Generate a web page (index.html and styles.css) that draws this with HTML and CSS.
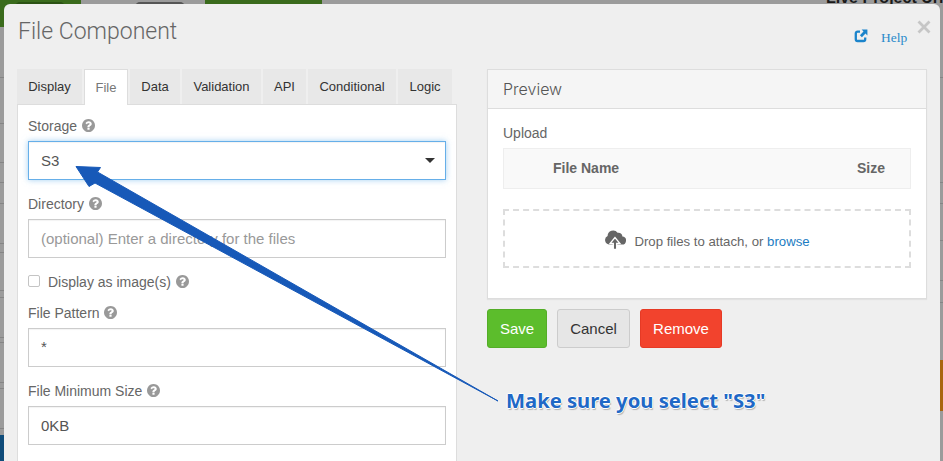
FILE: index.html
```html
<!DOCTYPE html>
<html lang="en">
<head>
<meta charset="utf-8">
<title>File Component</title>
<link rel="stylesheet" href="styles.css">
</head>
<body>
<svg class="defs" width="0" height="0" aria-hidden="true">
  <symbol id="q" viewBox="128 128 1536 1536"><path d="M1024 1376v-192q0-14-9-23t-23-9H800q-14 0-23 9t-9 23v192q0 14 9 23t23 9h192q14 0 23-9t9-23zm256-672q0-88-55.500-163T1086 425t-170-41q-243 0-371 213-15 24 8 42l132 100q7 6 19 6 16 0 25-12 53-68 86-92 34-24 86-24 48 0 85.500 26t37.500 59q0 38-20 61t-68 45q-63 28-115.500 86.500T768 1020v36q0 14 9 23t23 9h192q14 0 23-9t9-23q0-19 21.500-49.500T1100 957q32-18 49-28.500t46-35 44.500-48 28-60.500 12.500-81zm384 192q0 209-103 385.500T1281.500 1561 896 1664t-385.500-103T231 1281.500 128 896t103-385.500T510.500 231 896 128t385.500 103T1561 510.500 1664 896z"/></symbol>
</svg>

<div class="backdrop">
  <div class="bd-green bd-g1"></div>
  <div class="bd-pill bd-p1"></div>
  <div class="bd-green bd-g2"></div>
  <div class="bd-pill bd-p2"></div>
  <div class="bd-url">Live Project Url</div>
  <div class="bd-orange"></div>
  <div class="bd-blue"></div>
  <div class="rail rail-left">
    <i></i><i></i><i></i><i></i><i></i><i></i><i></i><i></i><i></i><i></i><i></i><i></i><i></i><i></i>
  </div>
  <div class="rail rail-right">
    <i></i><i></i><i></i><i></i><i></i><i></i>
  </div>
</div>

<main class="modal">
  <header class="modal-head">
    <h1 class="title">File Component</h1>
    <a class="help">
      <svg class="help-icon" viewBox="0 0 14 14" aria-hidden="true">
        <path d="M6 2.600H3.600A1.800 1.800 0 0 0 1.800 4.400v5.800A1.800 1.800 0 0 0 3.600 12h5.800a1.800 1.800 0 0 0 1.800-1.800V8.400" fill="none" stroke="#1b84cb" stroke-width="2.300"/>
        <path d="M7.600.6h5.800v5.800l-1.900-1.900-3.600 3.700-2-2 3.600-3.700z" fill="#1b84cb"/>
      </svg>
      <span class="help-text">Help</span>
    </a>
    <svg class="close" viewBox="0 0 14 14" aria-label="Close">
      <path d="M1.500 1.500L12.500 12.500M12.500 1.500L1.500 12.500" stroke="#c6c6c6" stroke-width="2.800" fill="none"/>
    </svg>
  </header>

  <div class="columns">
    <section class="left">
      <nav class="tabs">
        <span class="tab tab-display">Display</span>
        <span class="tab tab-file active">File</span>
        <span class="tab tab-data">Data</span>
        <span class="tab tab-validation">Validation</span>
        <span class="tab tab-api">API</span>
        <span class="tab tab-conditional">Conditional</span>
        <span class="tab tab-logic">Logic</span>
      </nav>
      <div class="tab-panel">
        <div class="label">Storage <svg class="q"><use href="#q"/></svg></div>
        <div class="select"><span>S3</span><i class="caret"></i></div>

        <div class="label label-dir">Directory <svg class="q"><use href="#q"/></svg></div>
        <input class="input" type="text" placeholder="(optional) Enter a directory for the files">

        <div class="check-row">
          <span class="checkbox"></span>
          <span class="check-label">Display as image(s) <svg class="q"><use href="#q"/></svg></span>
        </div>

        <div class="label label-pattern">File Pattern <svg class="q"><use href="#q"/></svg></div>
        <input class="input input-star" type="text" value="*">

        <div class="label label-min">File Minimum Size <svg class="q"><use href="#q"/></svg></div>
        <input class="input" type="text" value="0KB">
      </div>
    </section>

    <section class="right">
      <div class="preview">
        <div class="preview-head">Preview</div>
        <div class="preview-body">
          <div class="upload-label">Upload</div>
          <div class="file-table">
            <span class="th-name">File Name</span>
            <span class="th-size">Size</span>
          </div>
          <div class="dropzone">
            <svg class="cloud" viewBox="0 0 22 22" aria-hidden="true">
              <path d="M5 16.500A4.500 4.500 0 0 1 3.600 8a5.500 5.500 0 0 1 10-3.200A3.800 3.800 0 0 1 18.400 8.400 4 4 0 0 1 17.500 16.500z" fill="#666"/>
              <path d="M11 9.500l-5 6h3.300v6h3.400v-6h3.300z" fill="#666" stroke="#fff" stroke-width="1.300"/>
            </svg>
            <span class="drop-text">Drop files to attach, or <a class="browse">browse</a></span>
          </div>
        </div>
      </div>
      <div class="actions">
        <button class="btn btn-save">Save</button>
        <button class="btn btn-cancel">Cancel</button>
        <button class="btn btn-remove">Remove</button>
      </div>
    </section>
  </div>
</main>

<svg class="arrow" viewBox="0 0 943 461" aria-hidden="true">
  <path d="M76 166.500 L100.500 167.500 L97.500 172 L498 401 L95 183 L89 186.500 Z" fill="#1759b8" stroke="#1759b8" stroke-width="1" stroke-linejoin="round"/>
</svg>
<div class="note">Make sure you select "S3"</div>
</body>
</html>
```

FILE: styles.css
```css
* { box-sizing: border-box; }
html, body { height: 100%; }
body {
  margin: 0;
  width: 943px;
  height: 461px;
  overflow: hidden;
  background: #9b9b9b;
  font-family: "Liberation Sans", Arial, sans-serif;
  font-size: 14px;
  color: #666;
  position: relative;
}
.defs { position: absolute; }

/* dimmed page behind the dialog */
.backdrop { position: absolute; inset: 0; overflow: hidden; }
.bd-green { position: absolute; top: 0; background: #3a6b1c; }
.bd-g1 { left: 0; width: 81px; height: 27px; }
.bd-g2 { left: 205px; width: 117px; height: 4px; }
.bd-pill { position: absolute; top: 2px; height: 10px; border-radius: 5px; background: #555; }
.bd-p1 { left: 15px; width: 50px; background: #2b5214; }
.bd-p2 { left: 135px; width: 50px; }
.bd-url {
  position: absolute;
  left: 826px;
  top: -11px;
  font-size: 16px;
  font-weight: 700;
  line-height: 18px;
  color: #1a1a1a;
  white-space: nowrap;
}
.bd-orange { position: absolute; left: 940px; top: 360px; width: 3px; height: 51px; background: #a8650f; }
.bd-blue { position: absolute; left: 0; top: 435px; width: 4px; height: 26px; background: #0f4c7a; }
.rail { position: absolute; top: 0; width: 4px; height: 461px; }
.rail-left { left: 0; }
.rail-right { left: 940px; width: 3px; }
.rail i { position: absolute; left: 0; width: 100%; height: 1px; background: #858585; }
.rail-left i:nth-child(1) { top: 77px; }
.rail-left i:nth-child(2) { top: 123px; }
.rail-left i:nth-child(3) { top: 162px; }
.rail-left i:nth-child(4) { top: 182px; }
.rail-left i:nth-child(5) { top: 203px; }
.rail-left i:nth-child(6) { top: 243px; }
.rail-left i:nth-child(7) { top: 252px; }
.rail-left i:nth-child(8) { top: 290px; }
.rail-left i:nth-child(9) { top: 297px; }
.rail-left i:nth-child(10) { top: 337px; }
.rail-left i:nth-child(11) { top: 342px; }
.rail-left i:nth-child(12) { top: 382px; }
.rail-left i:nth-child(13) { top: 388px; }
.rail-left i:nth-child(14) { top: 428px; }
.rail-right i:nth-child(1) { top: 77px; }
.rail-right i:nth-child(2) { top: 182px; }
.rail-right i:nth-child(3) { top: 203px; }
.rail-right i:nth-child(4) { top: 240px; }
.rail-right i:nth-child(5) { top: 280px; }
.rail-right i:nth-child(6) { top: 302px; }

/* dialog */
.modal {
  position: absolute;
  left: 4px;
  top: 4px;
  width: 936px;
  height: 480px;
  padding: 0 13px;
  background: #efefef;
  border-radius: 6px 6px 0 0;
}
.modal-head {
  height: 65px;
  display: flex;
  align-items: flex-start;
  position: relative;
}
.title {
  margin: 14px 0 0 1px;
  font-family: "Roboto", "Liberation Sans", sans-serif;
  font-weight: 300;
  font-size: 23px;
  line-height: 28px;
  color: #666;
}
.help {
  position: absolute;
  left: 837px;
  top: 25px;
  display: flex;
  align-items: flex-start;
  gap: 13px;
}
.help-icon { width: 14px; height: 14px; }
.help-text {
  font-family: "Liberation Serif", serif;
  font-size: 13.500px;
  line-height: 15px;
  margin-top: 1px;
  color: #2a8bcb;
}
.close {
  position: absolute;
  left: 900px;
  top: 16px;
  width: 14px;
  height: 14px;
}

.columns {
  display: grid;
  grid-template-columns: 440px 440px;
  column-gap: 30px;
}

/* tabs */
.tabs { display: flex; height: 35px; }
.tab {
  display: flex;
  align-items: center;
  justify-content: center;
  background: #e8e8e8;
  color: #333;
  font-size: 13px;
  height: 35px;
  margin-right: 2px;
}
.tab-display { width: 65px; }
.tab-file { width: 44px; }
.tab-data { width: 50px; }
.tab-validation { width: 79px; }
.tab-api { width: 43px; }
.tab-conditional { width: 88px; }
.tab-logic { width: 54px; margin-right: 0; }
.tab.active {
  background: #fff;
  color: #777;
  border: 1px solid #ddd;
  border-bottom: 0;
  position: relative;
  height: 36px;
  margin-bottom: -1px;
  z-index: 1;
}
.tab-panel {
  background: #fff;
  border: 1px solid #ddd;
  padding: 12px 10px 0;
  height: 380px;
}

/* form */
.label {
  font-size: 14px;
  line-height: 18px;
  color: #666;
  margin-bottom: 6px;
  white-space: nowrap;
}
.q { width: 13px; height: 13px; fill: #999; vertical-align: -1px; margin-left: 1px; }
.select {
  height: 39px;
  border: 1px solid #66afe9;
  box-shadow: inset 0 1px 1px rgba(0,0,0,.05), 0 0 6px rgba(102,175,233,.6);
  display: flex;
  align-items: center;
  justify-content: space-between;
  padding: 0 10px 0 12px;
  background: #fff;
  color: #555;
  font-size: 15px;
}
.caret {
  width: 0; height: 0;
  border-left: 5px solid transparent;
  border-right: 5px solid transparent;
  border-top: 5px solid #333;
}
.input {
  display: block;
  width: 100%;
  height: 39px;
  border: 1px solid #ccc;
  border-radius: 0;
  background: #fff;
  padding: 0 12px;
  font: 15px "Liberation Sans", Arial, sans-serif;
  color: #555;
  outline: 0;
  box-shadow: inset 0 1px 1px rgba(0,0,0,.05);
}
.input-star { padding-bottom: 2px; }
.input::placeholder { color: #999; opacity: 1; }
.label-dir { margin-top: 15px; margin-bottom: 6px; }
.check-row { display: flex; align-items: flex-start; margin-top: 16px; height: 19px; }
.checkbox {
  width: 12px; height: 12px;
  border: 1px solid #c4c4c4;
  border-radius: 2px;
  background: #fff;
  margin-right: 8px;
  margin-top: 1px;
}
.check-label { font-size: 14px; line-height: 16px; color: #666; }
.label-pattern { margin-top: 11px; margin-bottom: 6px; }
.label-min { margin-top: 15px; margin-bottom: 6px; }

/* preview */
.preview {
  height: 230px;
  background: #fff;
  border: 1px solid #ddd;
  box-shadow: 0 1px 1px rgba(0,0,0,.05);
}
.preview-head {
  height: 39px;
  background: #f5f5f5;
  border-bottom: 1px solid #ddd;
  padding: 0 15px;
  font-family: "Inter", "Liberation Sans", sans-serif;
  font-weight: 300;
  font-size: 16px;
  line-height: 38px;
  color: #555;
}
.preview-body { padding: 15px 15px 0; }
.upload-label { font-size: 14px; line-height: 18px; color: #666; margin-bottom: 6px; }
.file-table {
  height: 41px;
  background: #f9f9f9;
  border: 1px solid #eee;
  display: flex;
  align-items: center;
  justify-content: space-between;
  padding: 0 25px 2px 49px;
  font-weight: 700;
  color: #666;
  font-size: 14px;
}
.dropzone {
  margin-top: 20px;
  height: 59px;
  border: 2px dashed #ddd;
  display: flex;
  align-items: center;
  justify-content: center;
  gap: 8px;
  font-size: 13.200px;
  color: #666;
}
.cloud { width: 22px; height: 22px; margin-bottom: 0; }
.drop-text { margin-top: 6px; }
.browse { color: #1b7cc2; }

.actions { display: flex; gap: 10px; margin-top: 10px; }
.btn {
  height: 39px;
  border-radius: 3px;
  border: 1px solid transparent;
  font: 15px "Liberation Sans", Arial, sans-serif;
  padding: 0;
}
.btn-save { width: 60px; background: #5cbd2c; border-color: #54ad28; color: #fff; }
.btn-cancel { width: 73px; background: #e6e6e6; border-color: #ccc; color: #333; }
.btn-remove { width: 82px; background: #f2432d; border-color: #e63a25; color: #fff; }

/* annotation */
.arrow { position: absolute; left: 0; top: 0; width: 943px; height: 461px; pointer-events: none; }
.note {
  position: absolute;
  left: 506px;
  top: 386px;
  font-family: "Noto Sans", "Open Sans", sans-serif;
  font-weight: 700;
  font-size: 20.200px;
  line-height: 28px;
  color: #2068c6;
  white-space: nowrap;
  text-shadow: 1px 0 0 #fff, -1px 0 0 #fff, 0 1px 0 #fff, 0 -1px 0 #fff, 1px 2px 1px rgba(0,0,0,.25);
}
```
